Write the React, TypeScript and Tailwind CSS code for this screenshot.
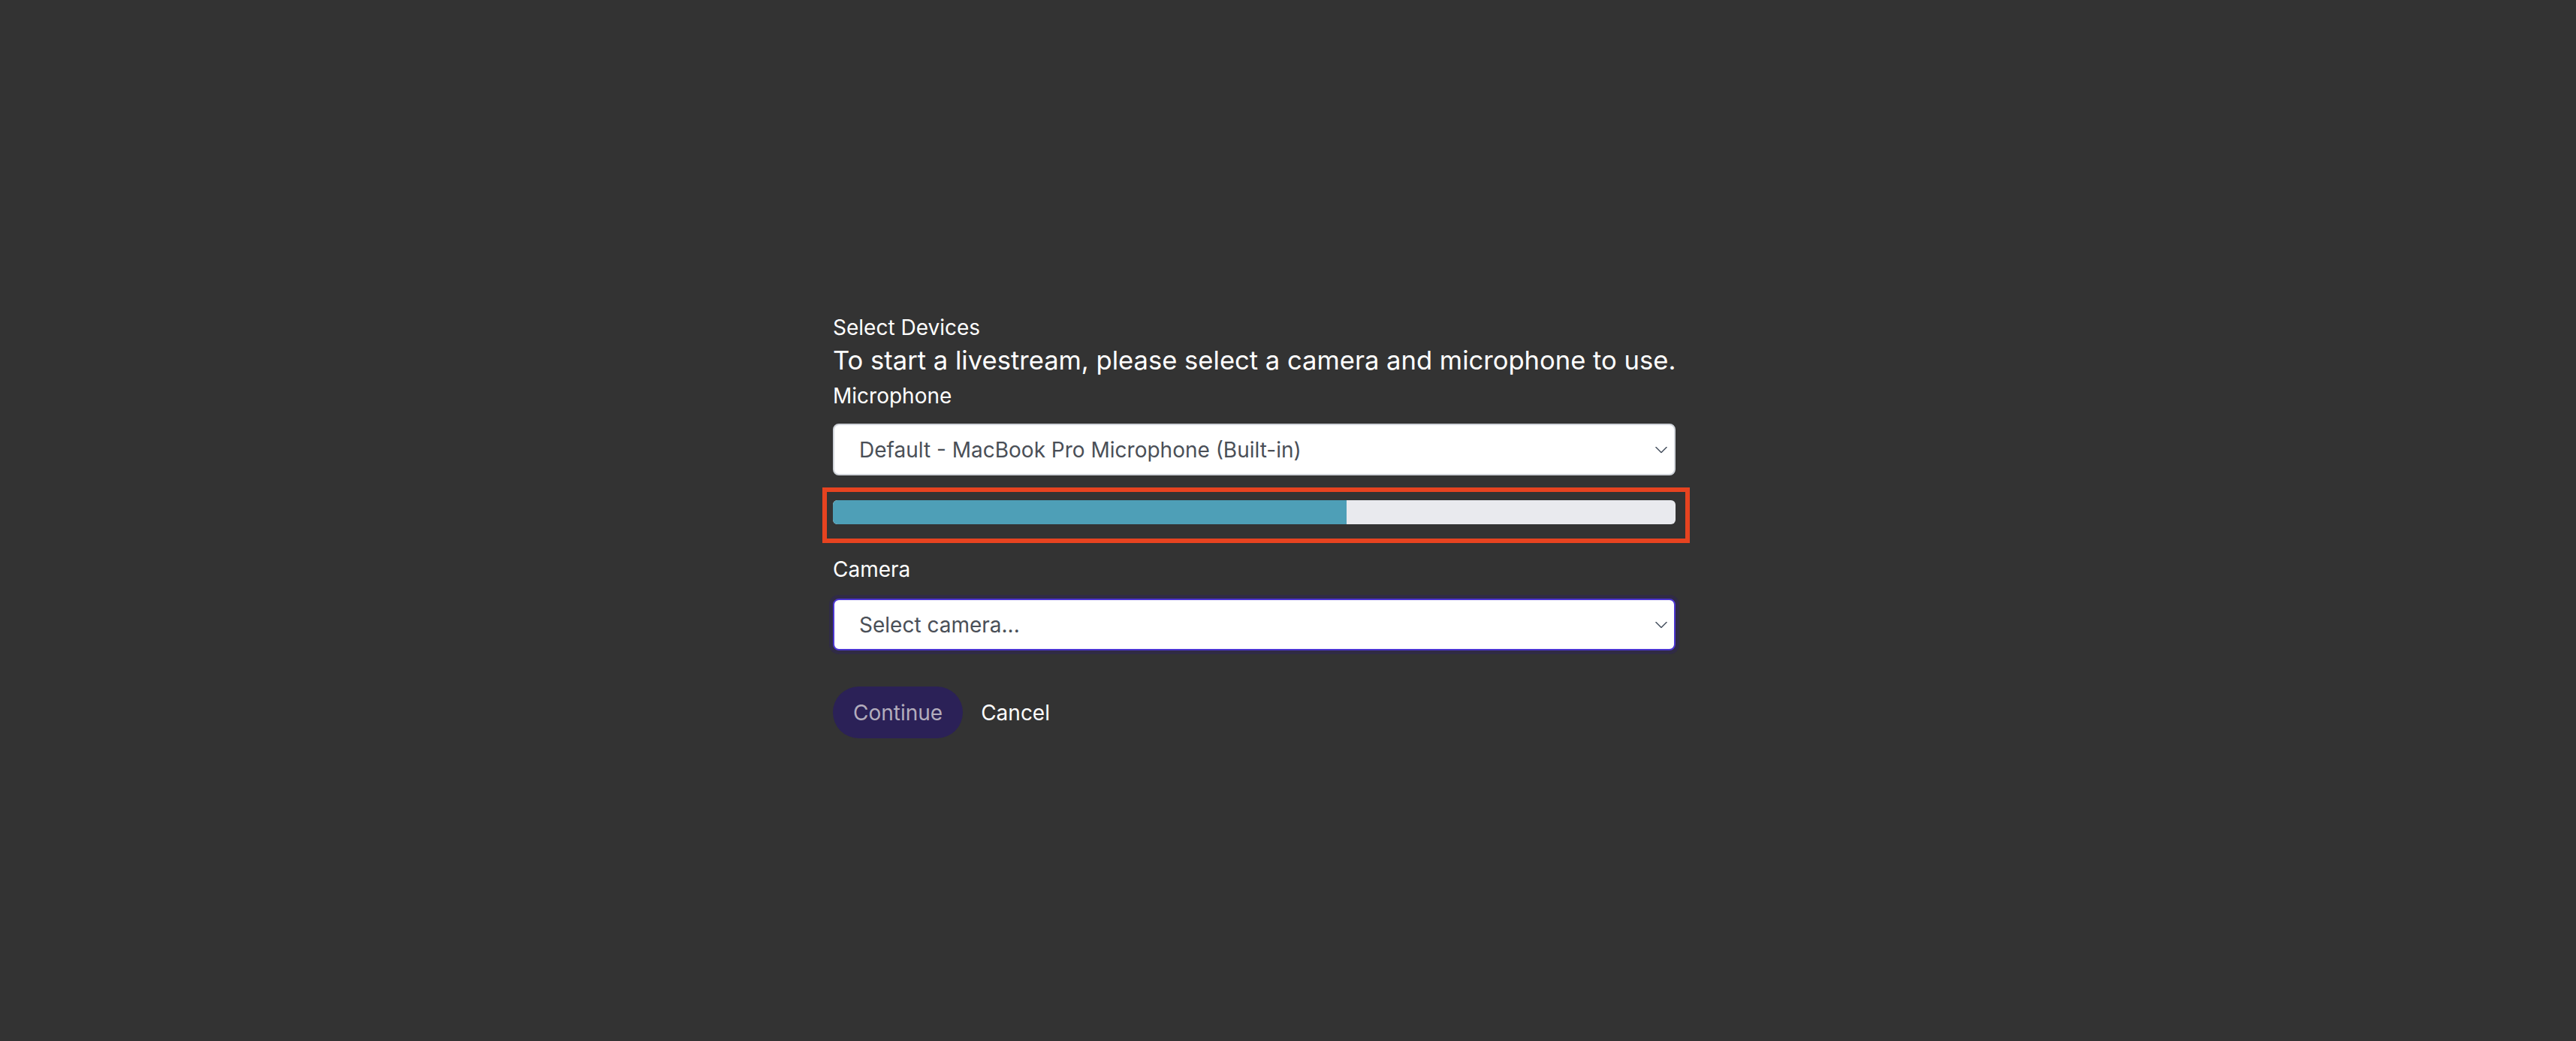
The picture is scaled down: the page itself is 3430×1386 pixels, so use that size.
import React from 'react';

function Chevron() {
  return (
    <svg className="pointer-events-none absolute right-[9px] top-1/2 -translate-y-1/2" width="16" height="9" viewBox="0 0 16 9" fill="none">
      <path d="M1 1l7 7 7-7" stroke="#4b5563" strokeWidth="1.6" strokeLinecap="round" strokeLinejoin="round" />
    </svg>
  );
}

function DeviceSelect({ value, focused }: { value: string; focused?: boolean }) {
  return (
    <div
      className={`relative flex h-[69px] items-center rounded-[8px] border-2 bg-white pl-[33px] pr-[40px] ${
        focused ? 'border-[#4c36d1] shadow-[0_0_0_5px_#302b45]' : 'border-[#d1d5db]'
      }`}
    >
      <span className="truncate text-[28px] leading-[40px] text-[#4a4f57]">{value}</span>
      <Chevron />
    </div>
  );
}

export default function App() {
  const level = 61;
  return (
    <main className="min-h-screen bg-[#333333] font-['Inter','Noto_Sans',sans-serif] text-white">
      <section className="ml-[1109px] flex w-[1122px] flex-col pt-[416px]">
        <h1 className="text-[28px] leading-[40px]">Select Devices</h1>
        <p className="whitespace-nowrap text-[34.6px] leading-[47px]">To start a livestream, please select a camera and microphone to use.</p>

        <label className="mt-[4px] text-[28px] leading-[40px]">Microphone</label>
        <div className="mt-[17px]">
          <DeviceSelect value="Default - MacBook Pro Microphone (Built-in)" />
        </div>

        <div className="relative mt-[33px] h-[32px]">
          <div className="flex h-full overflow-hidden rounded-[6px] bg-[#e9eaee]">
            <div className="h-full bg-[#4e9fb7]" style={{ width: `${level}%` }} />
          </div>
          <div className="pointer-events-none absolute -bottom-[25px] -left-[14px] -right-[19px] -top-[17px] border-[6px] border-[#e64320]" />
        </div>

        <label className="mt-[40px] text-[28px] leading-[40px]">Camera</label>
        <div className="mt-[19px]">
          <DeviceSelect value="Select camera..." focused />
        </div>

        <div className="mt-[48px] flex items-center gap-[24px]">
          <button className="h-[69px] rounded-full bg-[#2b2157] px-[27px] text-[28px] leading-[40px] text-[#b3adbd]">Continue</button>
          <button className="text-[28px] leading-[40px] text-white">Cancel</button>
        </div>
      </section>
    </main>
  );
}
